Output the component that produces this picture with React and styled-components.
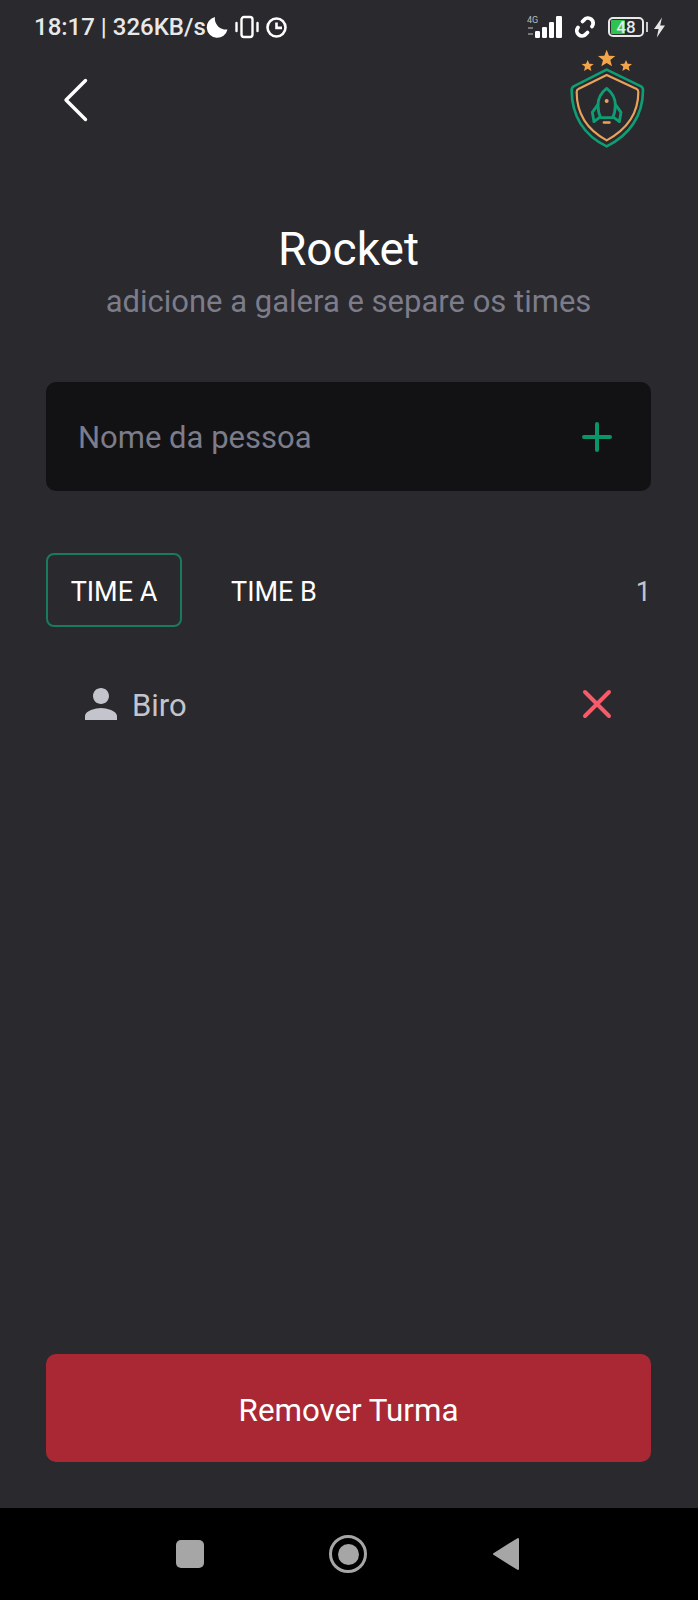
import React from "react";
import styled, { createGlobalStyle } from "styled-components";
import { MdPerson } from "react-icons/md";

const GlobalStyle = createGlobalStyle`
  html, body {
    margin: 0;
    padding: 0;
    background: #29292e;
    font-family: Roboto, "Liberation Sans", sans-serif;
  }
`;

const App = () => {
  return (
    <Screen>
      <GlobalStyle />
      <StatusBar>
        <StatusLeft>
          <StatusText>18:17 | 326KB/s</StatusText>
          <svg width="23" height="22" viewBox="0 0 23 22">
            <path d="M9 1a10.5 10.5 0 1 0 12.5 12.5a11 11 0 0 1-12.5-12.5z" fill="#fff" />
          </svg>
          <svg width="24" height="24" viewBox="0 0 24 24" fill="none" stroke="#fff" strokeWidth="2.4">
            <rect x="6.5" y="2" width="11" height="20" rx="2.5" />
            <path d="M1.5 8v8M22.5 8v8" strokeLinecap="round" />
          </svg>
          <svg width="23" height="23" viewBox="0 0 23 23" fill="none" stroke="#fff" strokeWidth="2.6">
            <circle cx="11.5" cy="11.5" r="9" />
            <path d="M11.5 6.5v5.4h5.5" />
          </svg>
        </StatusLeft>
        <StatusRight>
          <svg width="38" height="24" viewBox="0 0 38 24">
            <text x="0" y="8" fontSize="9" fill="#bbb" fontFamily="Roboto, sans-serif">4G</text>
            <rect x="1" y="12" width="5" height="2" fill="#777" />
            <rect x="1" y="18" width="5" height="2" fill="#777" />
            <rect x="8" y="16" width="5" height="7" rx="1.2" fill="#fff" />
            <rect x="15" y="12" width="5" height="11" rx="1.2" fill="#fff" />
            <rect x="22" y="7" width="5" height="16" rx="1.2" fill="#fff" />
            <rect x="29" y="1" width="6" height="22" rx="1.2" fill="#fff" />
          </svg>
          <LinkIcon width="24" height="24" viewBox="0 0 24 24" fill="none" stroke="#fff" strokeWidth="3.8">
            <path d="M9.5 6.5l1.5-1.5a5 5 0 0 1 8 6.5" strokeLinecap="round" />
            <path d="M14.5 17.5l-1.5 1.5a5 5 0 0 1-8-6.5" strokeLinecap="round" />
          </LinkIcon>
          <BatteryWrap>
            <Battery>
              <BatteryFill style={{ width: "46%" }} />
              <BatteryText>48</BatteryText>
            </Battery>
            <BatteryCap />
          </BatteryWrap>
          <svg width="13" height="21" viewBox="0 0 13 21">
            <path d="M9 0.5L1 12h4.6L3.8 20.5L12 8.5H7.2z" fill="#e6e6e6" />
          </svg>
        </StatusRight>
      </StatusBar>

      <Content>
        <Header>
          <svg width="26" height="44" viewBox="0 0 26 44" fill="none" stroke="#fff" strokeWidth="3.4" strokeLinecap="round" strokeLinejoin="round">
            <path d="M22.5 2.5L3 22l19.5 19.5" />
          </svg>
          <svg width="76" height="100" viewBox="210 144 228 300">
            <g fill="#f4a54a">
              <path d="M320 146l7 18 19 1-15 12 5 19-16-10-16 10 5-19-15-12 19-1z" />
              <path d="M263 177l5 11 13 1-10 8 3 13-11-7-11 7 3-13-10-8 13-1z" />
              <path d="M378 177l5 11 13 1-10 8 3 13-11-7-11 7 3-13-10-8 13-1z" />
            </g>
            <path d="M320 206l103 50q6 3 6 12c0 75-40 135-109 168c-69-33-105-93-105-168q0-9 6-12z" fill="none" stroke="#0f9d74" strokeWidth="8" strokeLinejoin="round" />
            <path d="M320 222l90 42q5 2 5 9c0 62-34 112-95 145c-61-33-90-83-90-145q0-7 5-9z" fill="none" stroke="#e8a25c" strokeWidth="6.5" strokeLinejoin="round" />
            <g fill="none" stroke="#0f9d74" strokeWidth="8.5" strokeLinejoin="round" strokeLinecap="round">
              <path d="M320 262c18 14 26 32 26 50c0 14-3 28-8 38h-36c-5-10-8-24-8-38c0-18 8-36 26-50z" />
              <path d="M294 310l-17 24l5 28l16-12" />
              <path d="M346 310l17 24l-5 28l-16-12" />
            </g>
            <circle cx="320" cy="300" r="6" fill="#e8a25c" />
            <rect x="308" y="361" width="24" height="7" rx="3" fill="#e8a25c" />
          </svg>
        </Header>

        <Title>Rocket</Title>
        <Subtitle>adicione a galera e separe os times</Subtitle>

        <InputBox>
          <Placeholder>Nome da pessoa</Placeholder>
          <svg width="30" height="30" viewBox="0 0 30 30" stroke="#0a9468" strokeWidth="4" strokeLinecap="round">
            <path d="M15 2v26M2 15h26" />
          </svg>
        </InputBox>

        <Tabs>
          <Tab $active>TIME A</Tab>
          <Tab>TIME B</Tab>
          <Count>1</Count>
        </Tabs>

        <PlayerRow>
          <PlayerInfo>
            <MdPerson size={48} color="#c4c4cc" />
            <PlayerName>Biro</PlayerName>
          </PlayerInfo>
          <svg width="30" height="30" viewBox="0 0 30 30" stroke="#f75a68" strokeWidth="4" strokeLinecap="round">
            <path d="M3 3l24 24M27 3L3 27" />
          </svg>
        </PlayerRow>

        <RemoveButton>Remover Turma</RemoveButton>
      </Content>

      <NavBar>
        <NavSquare />
        <NavCircle>
          <NavDot />
        </NavCircle>
        <svg width="28" height="34" viewBox="0 0 28 34">
          <path d="M26 2v30L2 17z" fill="#a6a6a6" stroke="#a6a6a6" strokeWidth="2" strokeLinejoin="round" />
        </svg>
      </NavBar>
    </Screen>
  );
};

const Screen = styled.div`
  width: 698px;
  height: 1600px;
  display: flex;
  flex-direction: column;
  background: #29292e;
  overflow: hidden;
`;

const StatusBar = styled.div`
  height: 54px;
  box-sizing: border-box;
  padding: 0 32px 0 34px;
  display: flex;
  align-items: center;
  justify-content: space-between;
`;

const StatusLeft = styled.div`
  display: flex;
  align-items: center;
  gap: 6px;
`;

const StatusText = styled.span`
  font-size: 24px;
  font-weight: 500;
  color: #e8e8e8;
  white-space: nowrap;
  margin-right: -6px;
`;

const StatusRight = styled.div`
  display: flex;
  align-items: center;
`;

const LinkIcon = styled.svg`
  margin: 0 11px 0 8px;
`;

const BatteryWrap = styled.div`
  display: flex;
  align-items: center;
  gap: 2px;
  margin-right: 5px;
`;

const Battery = styled.div`
  position: relative;
  width: 36px;
  height: 20px;
  box-sizing: border-box;
  border: 2px solid #e8e8e8;
  border-radius: 5px;
  padding: 1px;
  display: flex;
`;

const BatteryFill = styled.div`
  background: #2fc24f;
  border-radius: 1px;
`;

const BatteryText = styled.span`
  position: absolute;
  left: 0;
  right: 0;
  top: -2px;
  text-align: center;
  font-size: 17px;
  font-weight: 500;
  line-height: 20px;
  color: #e8e8e8;
`;

const BatteryCap = styled.div`
  width: 2px;
  height: 10px;
  background: #c8c8c8;
`;

const Content = styled.div`
  flex: 1;
  display: flex;
  flex-direction: column;
  padding: 0 47px 46px 46px;
`;

const Header = styled.div`
  display: flex;
  align-items: flex-start;
  justify-content: space-between;
  padding: 0 5px 0 17px;
  margin-top: -5px;
  height: 100px;

  svg:first-child {
    margin-top: 29px;
  }
`;

const Title = styled.h1`
  margin: 73px 0 0;
  font-size: 46px;
  line-height: 54px;
  font-weight: 400;
  color: #fff;
  text-align: center;
`;

const Subtitle = styled.p`
  margin: 8px 0 0;
  font-size: 31px;
  line-height: 36px;
  color: #7c7c8a;
  text-align: center;
`;

const InputBox = styled.div`
  margin-top: 62px;
  height: 109px;
  box-sizing: border-box;
  padding: 0 39px 0 32px;
  background: #121214;
  border-radius: 10px;
  display: flex;
  align-items: center;
  justify-content: space-between;
`;

const Placeholder = styled.span`
  padding-top: 2px;
  font-size: 31px;
  color: #7c7c8a;
`;

const Tabs = styled.div`
  margin-top: 62px;
  display: flex;
  align-items: center;
`;

const Tab = styled.div`
  width: 136px;
  height: 74px;
  box-sizing: border-box;
  border: 2px solid ${(props) => (props.$active ? "#1a7a5e" : "transparent")};
  border-radius: 8px;
  padding-top: 3px;
  display: flex;
  align-items: center;
  justify-content: center;
  font-size: 27px;
  color: #fff;
  margin-right: 24px;
`;

const Count = styled.span`
  margin-left: auto;
  padding-top: 3px;
  font-size: 27px;
  color: #c4c4cc;
`;

const PlayerRow = styled.div`
  margin-top: 53px;
  padding: 0 39px 0 31px;
  display: flex;
  align-items: center;
  justify-content: space-between;
`;

const PlayerInfo = styled.div`
  display: flex;
  align-items: center;
  gap: 7px;
`;

const PlayerName = styled.span`
  padding-top: 2px;
  font-size: 31px;
  color: #c4c4cc;
`;

const RemoveButton = styled.button`
  margin-top: auto;
  height: 108px;
  padding-top: 5px;
  border: none;
  border-radius: 10px;
  background: #aa2834;
  color: #fff;
  font-family: inherit;
  font-size: 31.3px;
`;

const NavBar = styled.div`
  height: 92px;
  background: #000;
  display: flex;
  align-items: center;
  justify-content: center;
  gap: 125px;
  padding-right: 2px;
`;

const NavSquare = styled.div`
  width: 28px;
  height: 28px;
  border-radius: 5px;
  background: #a6a6a6;
`;

const NavCircle = styled.div`
  width: 38px;
  height: 38px;
  box-sizing: border-box;
  border: 3px solid #a6a6a6;
  border-radius: 50%;
  display: flex;
  align-items: center;
  justify-content: center;
`;

const NavDot = styled.div`
  width: 21px;
  height: 21px;
  border-radius: 50%;
  background: #a6a6a6;
`;

export default App;
